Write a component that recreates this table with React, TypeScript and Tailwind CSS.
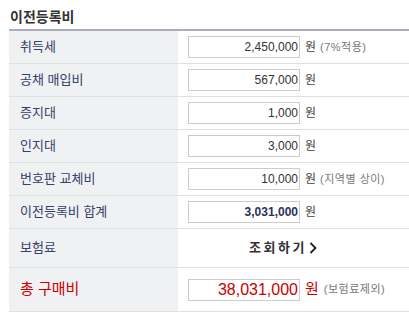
const font = { fontFamily: '"Liberation Sans", "Noto Sans CJK KR", sans-serif' };

type Row = {
  label: string;
  value: string;
  note?: string;
  bold?: boolean;
};

const rows: Row[] = [
  { label: "취득세", value: "2,450,000", note: "(7%적용)" },
  { label: "공채 매입비", value: "567,000" },
  { label: "증지대", value: "1,000" },
  { label: "인지대", value: "3,000" },
  { label: "번호판 교체비", value: "10,000", note: "(지역별 상이)" },
  { label: "이전등록비 합계", value: "3,031,000", bold: true },
];

export default function App() {
  return (
    <div className="w-[409px] h-[314px] overflow-hidden bg-white" style={font}>
      <h2 className="pl-[10px] pt-[8px] h-[29px] text-[14px] font-bold text-[#333] leading-[18px]">
        이전등록비
      </h2>
      <div className="ml-[9px] w-[400px] border-t-2 border-[#a9adbc]">
        {rows.map((row) => (
          <div key={row.label} className="flex h-[33px] border-b border-[#dedfe2]">
            <div className="w-[169px] bg-[#f0f1f3] pl-[11px] flex items-center text-[13px] text-[#36406a]">
              {row.label}
            </div>
            <div className="flex-1 flex items-center pl-[10px]">
              <div
                className={`w-[112px] h-[22px] border border-[#cccccc] flex items-center justify-end pr-[1px] text-[12px] ${
                  row.bold ? "font-bold text-[#2b3060]" : "text-[#333]"
                }`}
              >
                {row.value}
              </div>
              <span className="ml-[5px] text-[12px] text-[#444]">원</span>
              {row.note && (
                <span className="ml-[4px] text-[11px] tracking-[0.5px] text-[#777]">{row.note}</span>
              )}
            </div>
          </div>
        ))}
        <div className="flex h-[39px] border-b border-[#dedfe2]">
          <div className="w-[169px] bg-[#f0f1f3] pl-[11px] flex items-center text-[13px] text-[#36406a]">
            보험료
          </div>
          <div className="flex-1 flex items-center pl-[71px]">
            <span className="text-[13px] font-bold tracking-[2.5px] text-[#333]">조회하기</span>
            <svg width="8" height="12" viewBox="0 0 8 12" className="ml-[2px]">
              <path d="M1.5 1 L6.5 6 L1.5 11" fill="none" stroke="#222" strokeWidth="1.8" />
            </svg>
          </div>
        </div>
        <div className="flex h-[44px] border-b border-[#dedfe2]">
          <div className="w-[169px] bg-[#f0f1f3] pl-[11px] flex items-center text-[15px] text-[#cc0000]">
            총 구매비
          </div>
          <div className="flex-1 flex items-center pl-[10px]">
            <div className="w-[112px] h-[22px] border border-[#cccccc] flex items-center justify-end pr-[1px] text-[16px] text-[#cc0000]">
              38,031,000
            </div>
            <span className="ml-[5px] text-[15px] text-[#cc0000]">원</span>
            <span className="ml-[5px] text-[11px] tracking-[0.5px] text-[#777]">(보험료제외)</span>
          </div>
        </div>
      </div>
    </div>
  );
}
